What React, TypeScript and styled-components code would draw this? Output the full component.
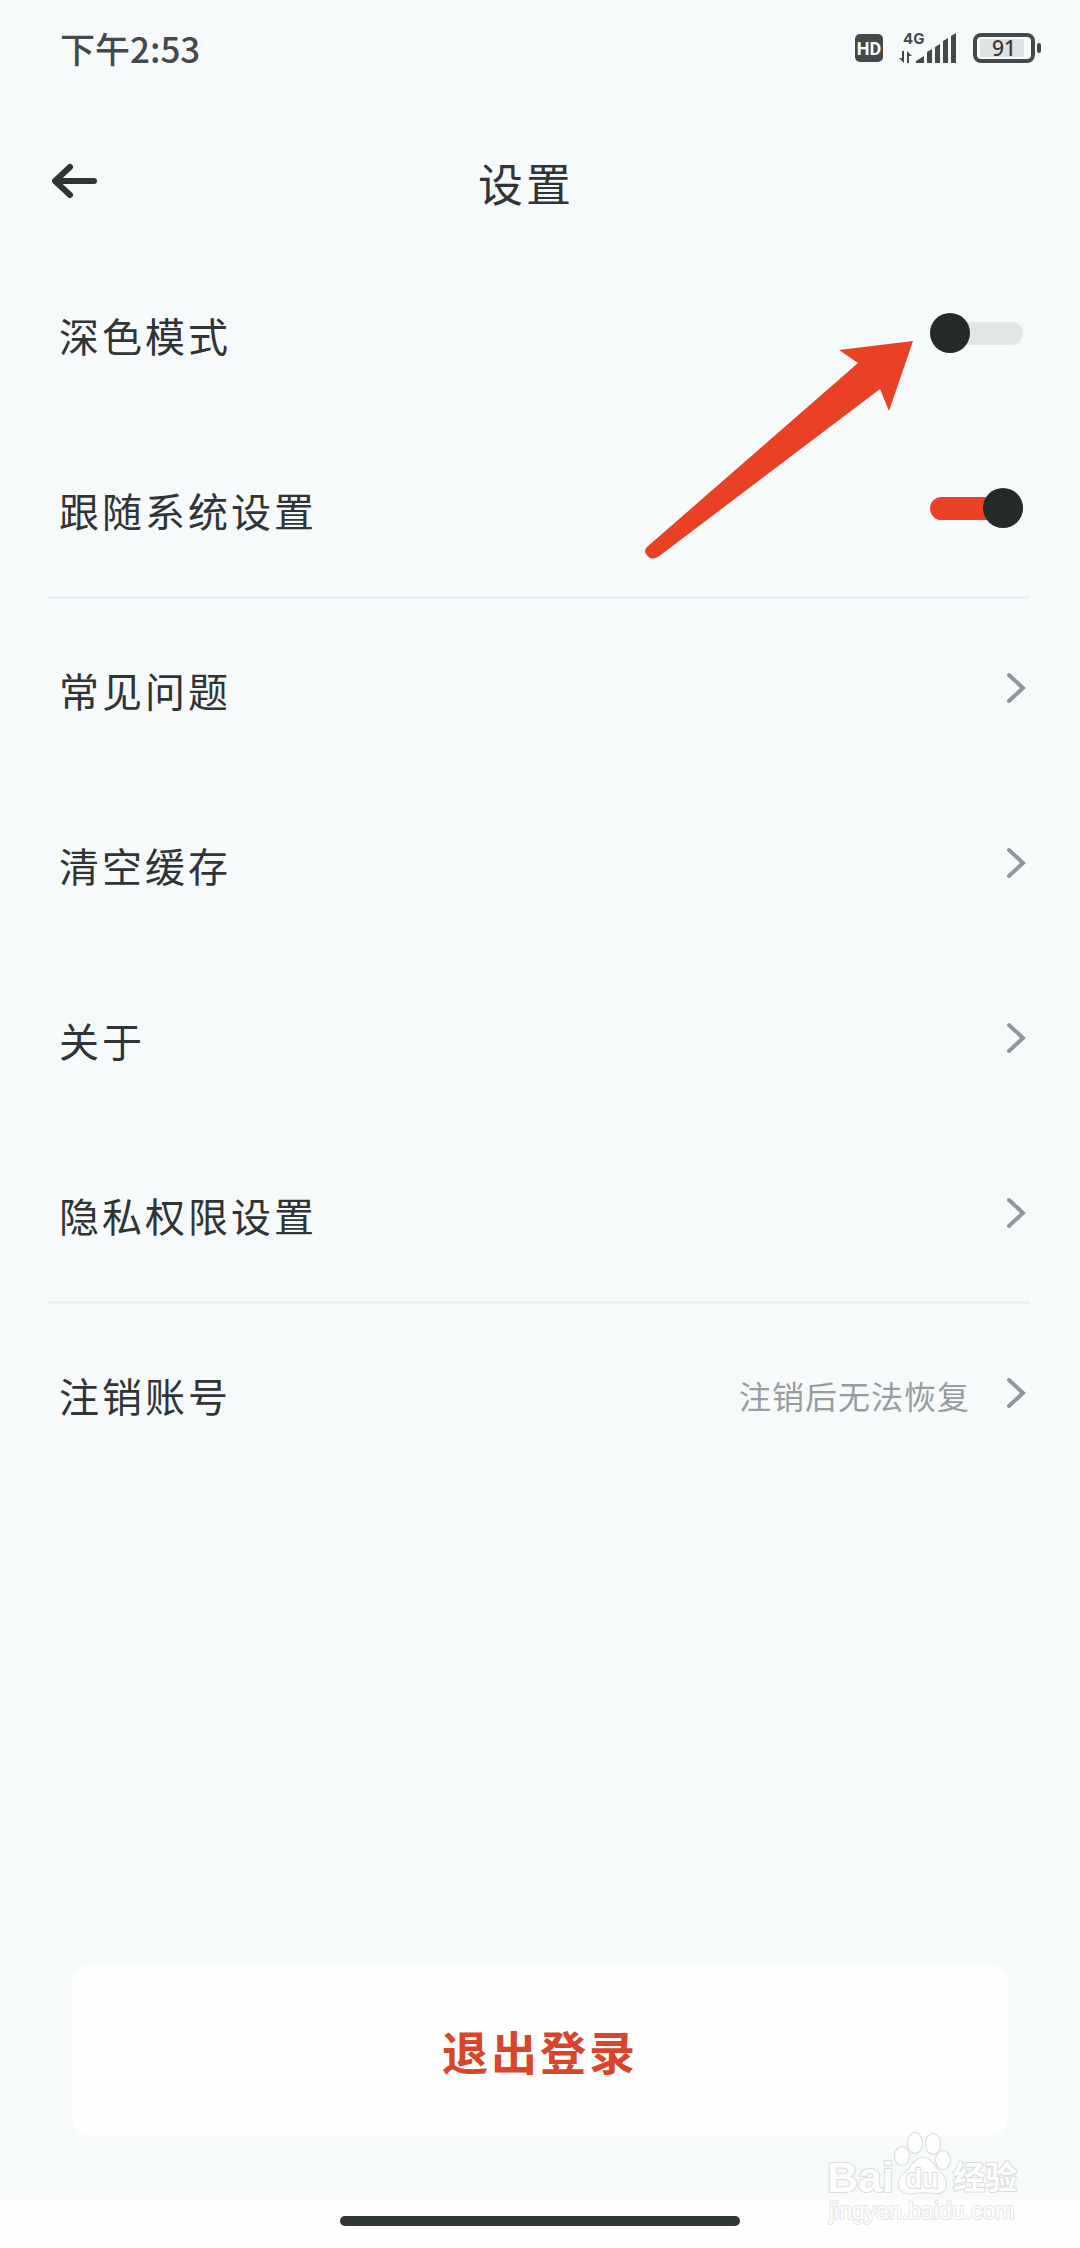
import React, { useState } from "react";
import styled, { createGlobalStyle } from "styled-components";

const color = {
  page: "#f6fafb",
  card: "#fefefe",
  ink: "#303435",
  status: "#45494a",
  muted: "#999c9e",
  line: "#edf0f2",
  accent: "#e94026",
  danger: "#d8452a",
  thumb: "#24292a",
  track: "#e3e6e7",
};

const GlobalStyle = createGlobalStyle`
  *, *::before, *::after { box-sizing: border-box; }
  body {
    margin: 0;
    background: ${color.page};
    font-family: "Noto Sans CJK SC", "Noto Sans", sans-serif;
    color: ${color.ink};
  }
`;

const Page = styled.div`
  position: relative;
  display: flex;
  flex-direction: column;
  min-height: 100vh;
  background: ${color.page};
`;

const StatusBar = styled.div`
  display: flex;
  align-items: center;
  justify-content: space-between;
  height: 96px;
  padding: 0 38px 0 60px;
  color: ${color.status};
`;

const Clock = styled.time`
  font-size: 35px;
  font-weight: 500;
  line-height: 48px;
`;

const StatusIcons = styled.div`
  display: flex;
  align-items: center;
  gap: 16px;
`;

const Header = styled.header`
  display: grid;
  grid-template-columns: 52px 1fr 52px;
  align-items: center;
  height: 149px;
  padding: 20px 76px 0 48px;
`;

const BackButton = styled.button`
  display: flex;
  padding: 0;
  border: 0;
  background: none;
  color: ${color.ink};
  cursor: pointer;
`;

const Title = styled.h1`
  margin: 0;
  padding-top: 4px;
  font-size: 45px;
  font-weight: 400;
  line-height: 60px;
  letter-spacing: 3px;
  text-align: center;
`;

const Main = styled.main`
  flex: 1;
`;

const Group = styled.section`
  & + & {
    margin-top: 1px;
  }
  & + &::before {
    content: "";
    display: block;
    height: 3px;
    margin: 0 50px 1px 48px;
    background: ${color.line};
  }
`;

const rowLayout = `
  display: flex;
  align-items: center;
  justify-content: space-between;
  width: 100%;
  height: 175px;
  color: inherit;
  text-decoration: none;
`;

const ToggleRow = styled.label`
  ${rowLayout}
  padding: 0 57px 0 59px;
  cursor: pointer;
`;

const LinkRow = styled.a`
  ${rowLayout}
  padding: 0 52px 0 59px;
`;

const RowLabel = styled.span`
  padding-top: 4px;
  font-size: 40px;
  line-height: 56px;
  letter-spacing: 3px;
`;

const RowEnd = styled.span`
  display: flex;
  align-items: center;
  gap: 34px;
`;

const Hint = styled.span`
  padding-top: 4px;
  font-size: 32px;
  line-height: 48px;
  letter-spacing: 1px;
  color: ${color.muted};
`;

const Switch = styled.input`
  appearance: none;
  position: relative;
  display: flex;
  align-items: center;
  width: 93px;
  height: 40px;
  margin: 0;
  cursor: pointer;

  &::before {
    content: "";
    position: absolute;
    inset: 9px 0 8px;
    border-radius: 12px;
    background: ${color.track};
  }
  &::after {
    content: "";
    position: relative;
    width: 40px;
    height: 40px;
    border-radius: 50%;
    background: ${color.thumb};
  }
  &:checked {
    justify-content: flex-end;
  }
  &:checked::before {
    background: ${color.accent};
  }
`;

const Footer = styled.footer`
  padding: 0 72px 64px;
`;

const LogoutButton = styled.button`
  width: 100%;
  height: 172px;
  padding: 0;
  border: 0;
  border-radius: 20px;
  background: ${color.card};
  color: ${color.danger};
  font-family: inherit;
  font-size: 46px;
  font-weight: 700;
  line-height: 64px;
  letter-spacing: 3px;
  cursor: pointer;
`;

const NavBar = styled.div`
  display: flex;
  justify-content: center;
  padding: 16px 0 22px;
  background: ${color.card};
`;

const HomeHandle = styled.div`
  width: 37%;
  height: 10px;
  border-radius: 5px;
  background: #2f3435;
`;

const Pointer = styled.svg`
  position: absolute;
  top: 340px;
  right: 166px;
  pointer-events: none;
`;

const Watermark = styled.svg`
  position: absolute;
  right: 56px;
  bottom: 20px;
  pointer-events: none;
`;

const HdIcon = () => (
  <svg width="28" height="28" viewBox="0 0 28 28" role="img" aria-label="HD">
    <rect width="28" height="28" rx="5" fill={color.status} />
    <text x="14" y="21" textAnchor="middle" fontFamily="Roboto, sans-serif" fontSize="18" fontWeight="700" fill="#fff">
      HD
    </text>
  </svg>
);

const SignalIcon = () => (
  <svg width="58" height="40" viewBox="0 -4 58 40" fill={color.status} role="img" aria-label="4G">
    <text x="4" y="12" fontFamily="Inter, sans-serif" fontSize="15" fontWeight="700">
      4G
    </text>
    <path d="M3 19h2v12l-5-5h3zM8 31V19l5 5h-3v7z" />
    <path d="M17 31v-2l8-5v7zM28 31V20l5-3v14zM36 31V15l5-3v19zM44 31V9l5-3v25zM52 31V4l5-3v30z" />
  </svg>
);

const BatteryIcon = () => (
  <svg width="69" height="30" viewBox="0 0 69 30" role="img" aria-label="91">
    <rect x="2" y="2" width="58" height="26" rx="6" fill="none" stroke={color.status} strokeWidth="4" />
    <rect x="7" y="6" width="44" height="18" rx="2" fill="#dfe1e2" />
    <rect x="64" y="10" width="4" height="10" rx="2" fill={color.status} />
    <text x="31" y="23" textAnchor="middle" fontFamily="'Noto Sans', sans-serif" fontSize="21" fontWeight="500" fill="#35393a">
      91
    </text>
  </svg>
);

const BackIcon = () => (
  <svg width="52" height="40" viewBox="0 0 52 40" fill="none" stroke="currentColor" strokeWidth="6" strokeLinecap="round" strokeLinejoin="round" aria-hidden="true">
    <path d="M46 20H8M22 6 7 20l15 14" />
  </svg>
);

const Chevron = () => (
  <svg width="24" height="32" viewBox="0 0 24 32" fill="none" stroke="#939698" strokeWidth="4" strokeLinecap="round" aria-hidden="true">
    <path d="M5 3l14 13L5 29" />
  </svg>
);

type ToggleProps = { label: string; initial: boolean };

function Toggle({ label, initial }: ToggleProps) {
  const [on, setOn] = useState(initial);
  return (
    <ToggleRow>
      <RowLabel>{label}</RowLabel>
      <Switch type="checkbox" role="switch" checked={on} onChange={(e) => setOn(e.target.checked)} />
    </ToggleRow>
  );
}

type LinkProps = { label: string; hint?: string };

function SettingLink({ label, hint }: LinkProps) {
  return (
    <LinkRow href="#">
      <RowLabel>{label}</RowLabel>
      <RowEnd>
        {hint && <Hint>{hint}</Hint>}
        <Chevron />
      </RowEnd>
    </LinkRow>
  );
}

export default function App() {
  return (
    <Page>
      <GlobalStyle />
      <StatusBar>
        <Clock>下午2:53</Clock>
        <StatusIcons>
          <HdIcon />
          <SignalIcon />
          <BatteryIcon />
        </StatusIcons>
      </StatusBar>
      <Header>
        <BackButton type="button" aria-label="返回">
          <BackIcon />
        </BackButton>
        <Title>设置</Title>
      </Header>
      <Main>
        <Group>
          <Toggle label="深色模式" initial={false} />
          <Toggle label="跟随系统设置" initial />
        </Group>
        <Group>
          <SettingLink label="常见问题" />
          <SettingLink label="清空缓存" />
          <SettingLink label="关于" />
          <SettingLink label="隐私权限设置" />
        </Group>
        <Group>
          <SettingLink label="注销账号" hint="注销后无法恢复" />
        </Group>
      </Main>
      <Footer>
        <LogoutButton type="button">退出登录</LogoutButton>
      </Footer>
      <NavBar>
        <HomeHandle />
      </NavBar>
      <Pointer width="270" height="220" viewBox="0 0 270 220" fill={color.accent} aria-hidden="true">
        <path d="M269 1 195 10l19 13L3 207q-4 4 0 8.500 5 6 13 0L236 49l9 22z" />
      </Pointer>
      <Watermark width="200" height="100" viewBox="0 0 200 100" fill="#fefefe" stroke="#d9dcdd" strokeWidth="2" paintOrder="stroke" strokeLinejoin="round">
        <text x="3" y="64" fontFamily="'Liberation Sans', sans-serif" fontSize="43" fontWeight="700">
          Bai
        </text>
        <ellipse cx="78" cy="28" rx="7" ry="9" />
        <ellipse cx="91" cy="15" rx="7" ry="10" />
        <ellipse cx="109" cy="16" rx="7" ry="10" />
        <ellipse cx="119" cy="32" rx="7" ry="9" />
        <path d="M99 30c7 0 10 6 14 11 5 6 9 8 9 15 0 8-7 10-12 9-8-1-13-1-21 0-7 1-14-1-14-9 0-7 5-10 10-15 4-5 7-11 14-11z" />
        <text x="98" y="60" textAnchor="middle" fontFamily="'Liberation Sans', sans-serif" fontSize="27" fontWeight="700">
          du
        </text>
        <text x="129" y="61" fontFamily="'Noto Sans CJK SC', sans-serif" fontSize="32" fontWeight="700">
          经验
        </text>
        <text x="5" y="91" fontFamily="'Liberation Sans', sans-serif" fontSize="23" stroke="#e4e6e7">
          jingyan.baidu.com
        </text>
      </Watermark>
    </Page>
  );
}
